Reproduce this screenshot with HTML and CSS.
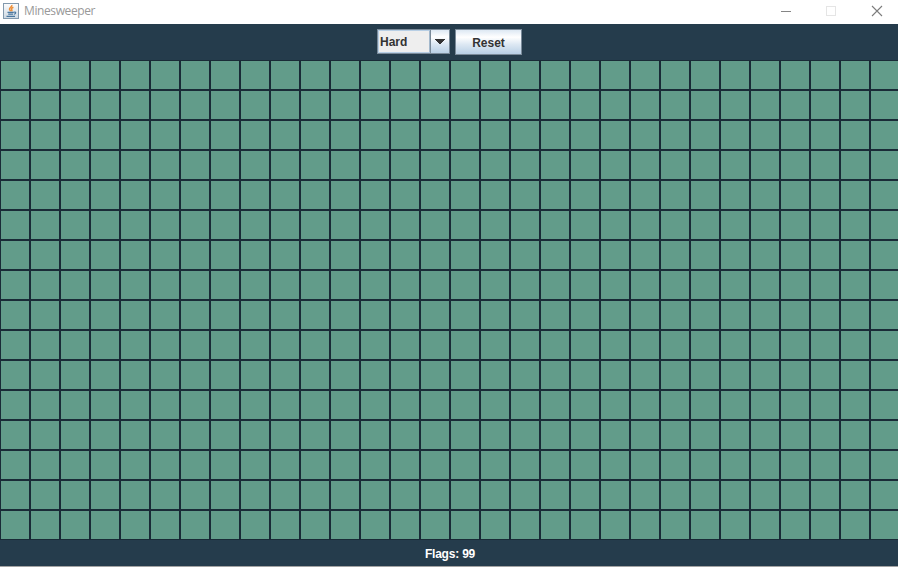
FILE: index.html
```html
<!DOCTYPE html>
<html lang="en">
<head>
<meta charset="utf-8">
<title>Minesweeper</title>
<link rel="stylesheet" href="styles.css">
</head>
<body>
<div class="window">
  <header class="titlebar">
    <svg class="app-icon" width="16" height="16" viewBox="0 0 16 16">
      <defs><linearGradient id="tile" x1="0" y1="0" x2="0" y2="1"><stop offset="0" stop-color="#fdfdfd"/><stop offset="1" stop-color="#ccd8e2"/></linearGradient></defs>
      <rect x=".5" y=".5" width="15" height="15" fill="url(#tile)" stroke="#8299ad"/>
      <path d="M8.8 2c.7 1.7-2.5 2.5-2.3 4.1.1.8.8 1.4 1.1 2.1M10.4 4.2C8.6 5 8 5.8 8.8 6.8c.3.5.1 1-.3 1.5" fill="none" stroke="#ee8f38" stroke-width="1.5"/>
      <path d="M4.5 9.3h6.3M5.2 11.2h5M3.5 13.3h8.5M11 9.2c2-.7 2.5 1.3.2 2.2" fill="none" stroke="#4a779f" stroke-width="1.2"/>
    </svg>
    <span class="title">Minesweeper</span>
    <svg class="controls" width="103" height="12" viewBox="0 0 103 12">
      <path d="M0 6.5h10" stroke="#858585"/>
      <rect x="45.5" y="1.5" width="9" height="9" fill="none" stroke="#e5e5e5"/>
      <path d="M91 1l10 10M101 1L91 11" stroke="#7c7c7c" stroke-width="1.1"/>
    </svg>
  </header>
  <div class="toolbar">
    <div class="combo">
      <span class="combo-value">Hard</span>
      <span class="combo-arrow"><svg width="10" height="5" viewBox="0 0 10 5" shape-rendering="crispEdges"><path d="M0 0h10v1H9v1H8v1H7v1H6v1H4V4H3V3H2V2H1V1H0z" fill="#333"/></svg></span>
    </div>
    <button class="reset">Reset</button>
  </div>
  <main class="board" id="board"></main>
  <footer class="status">Flags: 99</footer>
</div>
<script src="board.js"></script>
</body>
</html>
```
FILE: styles.css
```css
* { box-sizing: border-box; }
body { margin: 0; overflow: hidden; }
.window {
  width: 898px;
  height: 567px;
  display: flex;
  flex-direction: column;
  overflow: hidden;
  background: #253c4c;
  border-bottom: 1px solid #a3a3a3;
  font: bold 12px/14px "Liberation Sans", Arial, sans-serif;
}
.titlebar {
  flex: 0 0 24px;
  display: flex;
  align-items: flex-start;
  padding: 3px 14px 0 3px;
  background: #fff;
}
.title {
  margin: 0 auto 0 5px;
  font: 12px/16px "Open Sans", "Noto Sans", sans-serif;
  letter-spacing: -0.4px;
  color: #999;
}
.controls { margin-top: 2px; }
.toolbar {
  flex: 0 0 36px;
  display: flex;
  justify-content: center;
  align-items: flex-start;
  gap: 5px;
  padding: 5px 0 0 1px;
}
.combo {
  width: 73px;
  height: 25px;
  display: flex;
  border: 1px solid #7a8a99;
  color: #333;
}
.combo-value {
  flex: 0 0 52px;
  padding: 4px 0 0 1px;
  background: #eee;
  border: 1px solid #b8cfe5;
  border-right-color: #a3b8cc;
}
.combo-arrow {
  flex: 1;
  display: flex;
  align-items: center;
  padding-left: 4px;
  border-left: 1px solid #7a8a99;
  background: linear-gradient(#dde8f3 0%, #fff 30%, #dde8f3 60%, #b8cfe5 100%);
}
.reset {
  width: 67px;
  height: 26px;
  padding: 1px 0 0;
  border: 1px solid #7a8a99;
  border-radius: 0;
  background: linear-gradient(#dde8f3 0%, #fff 30%, #dde8f3 60%, #b8cfe5 100%);
  color: #333;
  font: inherit;
}
.board {
  flex: 0 0 480px;
  display: grid;
  grid-template-columns: repeat(30, 30px);
  grid-auto-rows: 30px;
}
.cell {
  background: #629c8a;
  border: 1px solid #192b37;
}
.status {
  flex: 1;
  padding: 7px 0 0 2px;
  text-align: center;
  letter-spacing: -0.2px;
  color: #fff;
}
```
FILE: board.js
```js
const ROWS = 16;
const COLUMNS = 30;
const board = document.getElementById("board");
for (let i = 0; i < ROWS * COLUMNS; i++) {
  const cell = document.createElement("div");
  cell.className = "cell";
  board.appendChild(cell);
}
```
